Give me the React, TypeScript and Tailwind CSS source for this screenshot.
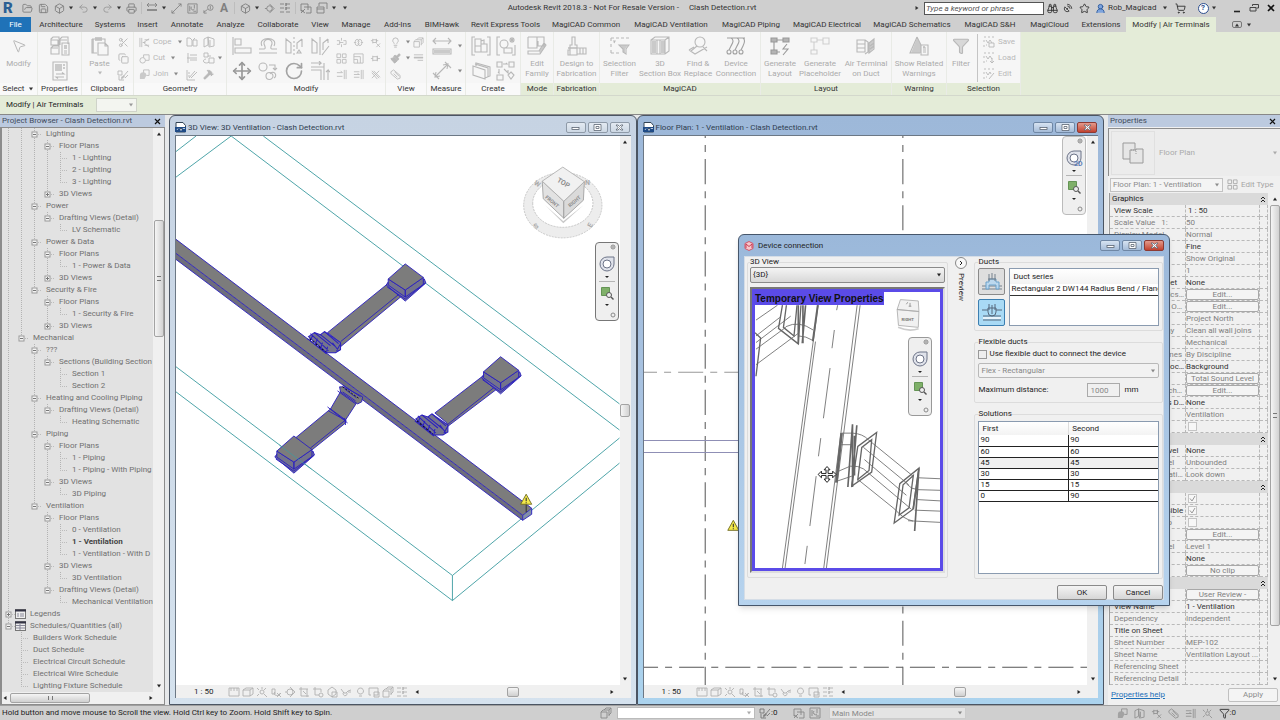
import React from "react";
import {
  Binoculars,
  Box,
  Copy,
  FolderOpen,
  Funnel,
  Hammer,
  Lightbulb,
  MousePointer2,
  Move,
  Paintbrush,
  Printer,
  Redo2,
  RotateCw,
  Save,
  SatelliteDish,
  Scissors,
  ShoppingCart,
  Star,
  Undo2,
  UserRound,
} from "lucide-react";

/* ---------- icons ---------- */

interface GlyphDef {
  box: number;
  d: string;
  fill?: string;
}

const GLYPHS: Record<string, GlyphDef> = {
  typeProps: {
    box: 20,
    d: "M1 3l2-2h6v8H1zM10 9V3l2-2h6v7M1 4h7M8 4v5M10 4h7M1 12l2-2h6v8H1zM1 12h7M12 7h7v12h-7zM14 15h3M14 17h3",
    fill: "M14 9h3v4h-3z",
  },
  pageProps: {
    box: 20,
    d: "M3 1h14v18H3zM6 13h8l-2-1.500M14 16H6l2 1.500",
    fill: "M5 3h7v7H5zM13 3h2v2h-2zM13 6h2v2h-2z",
  },
  paste: {
    box: 20,
    d: "M2 3h13v4M2 3v14h5M8 7h7l3 3v9H8zM15 7v3h3",
    fill: "M5 1h7v4H5zM2 3h2v14H2z",
  },
  match: { box: 12, d: "M1 2h4v4H1zM2 7v4h5M5 9l6-7M8 9l3-3", fill: "M4 8l3-2 1 2-4 3z" },
  cope: { box: 12, d: "M1 1v10M3 1v10M11 2L5 6l6 5M4 6h3M6 3h5M6 9h5" },
  circleCut: { box: 12, d: "M1 8a3 3 0 1 0 6 0a3 3 0 1 0-6 0M5 2h6v6H7M5 2v3" },
  joinGeo: { box: 12, d: "M5 1h6v6H8M5 1v3", fill: "M1 7a3 3 0 1 1 7 0l-2 4H1z" },
  offsetGeo: { box: 12, d: "M1 2h3l2 2v6H1zM7 4h4v6H7zM7 4l2-2" },
  wallJoin: { box: 12, d: "M1 3l4-2v8l-4 2zM5 1l6 2v7l-5 1zM7 4v6" },
  beam: { box: 12, d: "M2 1v10M4 3h7M4 6h7M4 8h7M1 6h3" },
  splitFace: { box: 12, d: "M1 1h4v4H1zM5 4h3M6 6h5v5H6zM3 7a3 2 0 1 0 3 3" },
  paintMat: { box: 12, d: "M1 1v10h8M3 9l6-7M5 9l6-6M2 4h2M2 7h2" },
  align: { box: 20, d: "M1 1v18M3 3h6v6H3zM3 12h16v5H3z" },
  offset: { box: 20, d: "M1 17h18M1 13h5c2 0 1-3 0-5c-1-6 9-6 8 0c-1 2-2 5 0 5h5M4 10c-5-10 17-10 12 0" },
  mirrorAxis: { box: 20, d: "M2 3l5 4v10H2zM10 1v2M10 5v2M10 9v2M10 13v2M10 17v2M18 3l-5 4v6M13 17l2-3 2 3zM18 3v8" },
  mirrorDraw: { box: 20, d: "M2 3l5 4v10H2zM10 1v18M18 3l-5 4v7M18 3v4M12 19l7-9" },
  copyMove: { box: 20, d: "M1 6a4 4 0 1 0 8 0a4 4 0 1 0-8 0M8 15a3 3 0 1 0 7 0a3 3 0 1 0-7 0M12 13a3 3 0 1 1 4 4M11 4h6v4M15 7l2 2 2-2" },
  trimCorner: { box: 20, d: "M1 6h13v13M1 9h10v10M1 2h10l-2-2M11 2L9 4M18 19V9l-2 2M18 9l2 2M14 6V2" },
  split: { box: 12, d: "M1 4h3v4H1M8 4h3v4H8M6 1v3M6 8v3M4 6h4" },
  splitGap: { box: 12, d: "M1 6h2M9 6h2M3 6a2 2 0 1 0 3 0a2 2 0 1 0-3 0M6 6a2 2 0 1 0 3 0a2 2 0 1 0-3 0" },
  unpin: { box: 12, d: "M1 4h2M3 2v5M3 3h4v3H3M7 2v4M7 4h2M7 7l4 4M11 7l-4 4" },
  array: { box: 12, d: "M1 1h4v4H1zM7 1h4v4H7zM1 7h4v4H1zM7 7h4v4H7z" },
  scale: { box: 12, d: "M1 11V1h10v10zM1 7h4v4M1 4h7v7" },
  pin: { box: 12, d: "M1 6h2M3 3v6M3 4h5v4H3M8 3v6M8 6h3" },
  trimOne: { box: 12, d: "M9 1v10M11 1v10M1 4h6l-2-2M1 8h6" },
  trimMulti: { box: 12, d: "M9 1v10M11 1v10M1 3h6M1 6h6l-2-1M1 9h6" },
  del: { box: 12, d: "M2 2l8 8M10 2l-8 8M4 2l7 7M2 4l6 7" },
  boxes: { box: 12, d: "M4 3l2-2h5v5l-2 2M1 5h6v6H1zM3 3h6v6M9 3l2-2M1 5l2-2" },
  lines: { box: 12, d: "M1 2h10M1 5h10M5 8h6", fill: "M1 4h10v2H1z" },
  tag: { box: 12, d: "M1 3l3-2 7 6v3l-3 1-7-6zM4 5l4 4M5 3l5 5" },
  measure: { box: 20, d: "M1 5h18M4 2L1 5l3 3M16 2l3 3-3 3M1 13h18v5H1z", fill: "M2 14h16v3H2z" },
  dimension: { box: 20, d: "M3 16L16 3M1 12l6 6M13 1l6 6M4 11l-1 5 5-1M11 4l5-1-1 5" },
  createSimilar: { box: 20, d: "M4 1H1v18h3M16 1h3v18h-3M4 3h6v7H4zM4 10h6v6H4zM10 8h6v8h-6zM10 5l3-1v4" },
  createGroup: { box: 20, d: "M4 1H1v18h3M16 19h3V9M4 8a4 4 0 1 0 8 0a4 4 0 1 0-8 0M8 12h8v5H8zM16 1v6M13 4h6M14 2l4 4M18 2l-4 4" },
  assembly: { box: 20, d: "M2 5l12 4v9L2 14zM5 5V2l14 4v9l-5 2M4 3l13 4v9" },
  parts: { box: 20, d: "M1 1h5v5H1zM13 1h5v5h-5zM7 3h4l-1-1M3 8v4l-1-1M8 8l4 4v-3M1 14h6v5H1zM15 11l3 3-3 4-3-4z" },
  editFamily: { box: 20, d: "M1 1h16v9H11V5M1 1v11h9V1M1 15v3h12l6-9-2-2-5 8z", fill: "M12 15l5-7 2 1-6 9z" },
  fabrication: { box: 20, d: "M5 1h3v8h2v10H3V9h2zM10 12h9v6h-9M13 12v6M16 12v6M1 14h2v5H1z", fill: "M1 11h9v2H1z" },
  selFilter: { box: 20, d: "M1 2h3M6 2h3M11 2h3M16 2h3M1 2v3M1 8v3M1 14v3M1 17h3M6 17h3M3 5h2l-1 2M9 9h10l-3 4v5l-3-2v-3z", fill: "M10 9h8l-3 4v4l-2-1v-3z" },
  sectionBox: { box: 20, d: "M1 4l4-3h14v14l-4 3H1zM1 4h14v14M15 4l4-3M7 4v14M10 4v14", fill: "M2 5h4v12H2zM11 5h4v12h-4z" },
  find: { box: 20, d: "M7 6a5 5 0 1 0 10 0a5 5 0 1 0-10 0M1 14l6 4 12-7M9 10l-6 5M15 11l4 4M1 14l5-3" },
  device: { box: 20, d: "M1 2h18M2 2h3c4 2 1 6 0 8l-2 4M8 2h3c4 2 1 6 0 8l-2 4M14 2h3c3 2 1 6 0 8l-2 4M1 16a2 2 0 1 0 4 0a2 2 0 1 0-4 0M7 16a2 2 0 1 0 4 0a2 2 0 1 0-4 0M13 16a2 2 0 1 0 4 0a2 2 0 1 0-4 0" },
  genLayout: { box: 20, d: "M7 4h6M4 6v8M1 2h6v4H1zM13 2h6v4h-6zM7 16h3M1 14h6v4H1zM17 8l-4 5h5l-5 6", fill: "M1 2h6v4H1zM13 2h6v4h-6zM1 14h6v4H1z" },
  genPlaceholder: { box: 20, d: "M7 4h6M4 6v8M1 2h6v4H1zM13 2h6v6h-6zM1 14h6v4H1z" },
  airTerminal: { box: 20, d: "M1 4h8v12H1zM1 8h8M1 12h8M9 4l3 2v10l-3 2M13 7l5-4v10l-5 4zM14 10l4-3M14 13l4-3", fill: "M13 7l5-4v9l-5 4z" },
  warnings: { box: 20, d: "M8 1L1 17h10M8 1l4 8M12 9h7v10h-7zM14 12h3M14 14h3M14 16h3", fill: "M8 2l4 7v8H2zM14 10h2v2h-2z" },
  selSave: { box: 12, d: "M1 1h2M5 1h2M9 1h2M1 4v2M1 9v2M3 9h1M3 4l2 3 2-3 2 3M6 7h5v4H6z" },
  selLoad: { box: 12, d: "M1 1h2M5 1h2M9 1h2M1 4v2M1 9v2M3 9h1M3 4l2 3 2-3 2 3M9 6v5M7 9l2 2 2-2" },
  selEdit: { box: 12, d: "M1 1h2M5 1h2M9 1h2M1 4v2M1 9v2M3 9h1M3 4l2 3 2-3 1 2M6 11l5-6" },
  dimLine: { box: 12, d: "M1 3h10M1 8h10M3 1L1 3l2 2M9 1l2 2-2 2", fill: "M1 7h10v2H1z" },
  diag: { box: 12, d: "M1 11L11 1M1 8v3h3M8 1h3v3" },
  sheet: { box: 12, d: "M1 1h10v10H1zM3 3v6M5 4a2 2 0 1 0 3 3M8 2v4M7 9h3" },
  tagOne: { box: 12, d: "M5 5a3 3 0 1 0 6 0a3 3 0 1 0-6 0M1 10l4-3M8 3v4M1 8v3h3" },
  sectionMark: { box: 12, d: "M3 6a3 3 0 1 0 6 0a3 3 0 1 0-6 0M1 6h2M6 1l5 5-5 5" },
  thin: { box: 12, d: "M1 2h4M7 2h4M1 6h4M7 6h4M1 10h4M7 10h4", fill: "M6 1h2v3H6zM6 5h2v3H6z" },
  closeHidden: { box: 12, d: "M1 2h7v6M1 2v7h3M4 5h7v6H6M1 8l4 3M5 7l-4 4" },
  switchWin: { box: 12, d: "M3 1h8v6M3 1v3M1 5h7v6H1zM1 7h7" },
  scaleBar: { box: 12, d: "M1 2h10v8H1zM3 2v3M6 2v3M9 2v3" },
  cubeSmall: { box: 12, d: "M1 4h7v6H1zM1 4l3-2h7v6l-3 2M8 4l3-2" },
  sun: { box: 12, d: "M4 6a2 2 0 1 0 4 0a2 2 0 1 0-4 0M1 2l2 2M10 2L8 4M1 10l2-2M8 8l3 3M6 1v2" },
  shadow: { box: 12, d: "M2 3h3v5H2zM5 6a3 2 0 1 0 5 1M7 7l4 4M11 7l-4 4" },
  crop: { box: 12, d: "M1 3h9M3 1v9h8M9 3v8M5 5l3 3" },
  cropOn: { box: 12, d: "M1 3h8M3 1v8h4M9 3v3M7 9a2 2 0 1 0 4 0a2 2 0 1 0-4 0" },
  lock3d: { box: 12, d: "M2 4l4-3 4 3v4L6 11 2 8zM6 6h5v5H6z" },
  glasses: { box: 12, d: "M1 3l3 4h2l2-2 3-1M4 6a2 2 0 1 0 3 1M8 6h3" },
  bulb: { box: 12, d: "M6 8a3 3 0 1 1 1 0zM5 10h3" },
  constraints: { box: 12, d: "M1 2h9v7H6M1 2v7h2M6 6h5v5H6z" },
};

const Glyph = ({ name, className = "size-3" }: { name: string; className?: string }) => {
  const glyph = GLYPHS[name];
  return (
    <svg viewBox={`0 0 ${glyph.box} ${glyph.box}`} className={`shrink-0 ${className}`} aria-hidden="true">
      {glyph.fill && <path d={glyph.fill} fill="currentColor" opacity="0.7" />}
      <path d={glyph.d} fill="none" stroke="currentColor" strokeWidth={glyph.box === 20 ? 1.1 : 0.9} />
    </svg>
  );
};

const Caret = ({ className = "" }: { className?: string }) => (
  <svg viewBox="0 0 6 4" className={`h-1 w-1.5 shrink-0 ${className}`} aria-hidden="true">
    <path d="M1 0.5h4L3 3.5z" fill="currentColor" />
  </svg>
);

const WarningSign = ({ x, y }: { x: number; y: number }) => (
  <g>
    <path d={`M${x} ${y - 6}l5.5 10h-11z`} fill="#f5ea4a" stroke="#6f6a20" strokeWidth="0.9" />
    <path d={`M${x} ${y - 2.5}v3.5M${x} ${y + 2}v1`} stroke="#333" strokeWidth="1.1" />
  </g>
);

/* ---------- title bar ---------- */

const QuickButton = ({ label, children }: { label: string; children: React.ReactNode }) => (
  <button aria-label={label} className="flex h-4 w-4 shrink-0 items-center justify-center">
    {children}
  </button>
);

const Separator = () => <span className="mx-0.5 h-3 w-px bg-[#bdbdbd]" />;

const TitleBar = () => (
  <header className="flex h-4 items-center bg-[#cfcfcf] text-[#333]">
    <div className="flex flex-1 items-center text-[#808080]">
      <span className="w-[19px] pl-[3px] text-[15px] leading-4 font-black text-[#2c5f94]">R</span>
      <QuickButton label="Open"><FolderOpen className="size-[11px]" /></QuickButton>
      <QuickButton label="Save"><Save className="size-[11px]" /></QuickButton>
      <QuickButton label="Synchronize"><Box className="size-[11px]" /></QuickButton>
      <Caret className="mx-px text-[#333]" />
      <QuickButton label="Undo"><Undo2 className="size-[11px] text-[#9a9a9a]" /></QuickButton>
      <Caret className="mx-px text-[#333]" />
      <QuickButton label="Redo"><Redo2 className="size-[11px] text-[#9a9a9a]" /></QuickButton>
      <Caret className="mx-px text-[#333]" />
      <QuickButton label="Print"><Printer className="size-[11px]" /></QuickButton>
      <Separator />
      <QuickButton label="Measure"><Glyph name="dimLine" /></QuickButton>
      <Caret className="mx-px text-[#333]" />
      <QuickButton label="Dimension"><Glyph name="diag" className="size-[11px]" /></QuickButton>
      <QuickButton label="Sheet"><Glyph name="sheet" className="size-[11px]" /></QuickButton>
      <QuickButton label="Tag"><Glyph name="tagOne" className="size-[11px]" /></QuickButton>
      <QuickButton label="Text"><span className="text-[12px] leading-4 font-bold">A</span></QuickButton>
      <Separator />
      <QuickButton label="3D view"><Box className="size-[11px]" /></QuickButton>
      <Caret className="mx-px text-[#333]" />
      <QuickButton label="Section"><Glyph name="sectionMark" className="size-[11px]" /></QuickButton>
      <QuickButton label="Thin lines"><Glyph name="thin" /></QuickButton>
      <Separator />
      <QuickButton label="Close hidden"><Glyph name="closeHidden" /></QuickButton>
      <QuickButton label="Switch windows"><Glyph name="switchWin" /></QuickButton>
      <Caret className="mx-px text-[#333]" />
      <Caret className="mx-1 text-[#333]" />
    </div>
    <p className="mr-4 whitespace-pre">Autodesk Revit 2018.3 - Not For Resale Version -     Clash Detection.rvt</p>
    <div className="flex flex-1 items-center justify-end">
      <Caret className="mr-1 -rotate-90" />
      <input
        type="text"
        aria-label="Search help"
        placeholder="Type a keyword or phrase"
        className="h-[13px] w-[120px] border border-[#555] bg-white px-px text-[8px] italic placeholder:text-[#555]"
      />
      <QuickButton label="Search"><Binoculars className="size-[11px]" /></QuickButton>
      <QuickButton label="Communication center"><SatelliteDish className="size-[10px]" /></QuickButton>
      <QuickButton label="Favorites"><Star className="size-[11px]" /></QuickButton>
      <QuickButton label="Account"><UserRound className="size-[11px] fill-[#7da3dd] text-[#2f5c9e]" /></QuickButton>
      <span className="w-[50px]">Rob_Magicad</span>
      <Caret className="mx-1" />
      <QuickButton label="App store"><ShoppingCart className="size-[11px]" /></QuickButton>
      <span className="w-[7px]" />
      <QuickButton label="Help">
        <span className="flex size-[11px] items-center justify-center rounded-full border border-[#2d4f8f] bg-white font-bold text-[#2d4f8f]">?</span>
      </QuickButton>
      <Caret className="mr-[11px]" />
      <button aria-label="Minimize" className="flex h-4 w-[18px] items-center justify-center">
        <svg viewBox="0 0 10 10" className="size-2.5"><path d="M2 8.500h6" stroke="#222" strokeWidth="1.600" /></svg>
      </button>
      <button aria-label="Restore" className="flex h-4 w-4 items-center justify-center">
        <svg viewBox="0 0 10 10" className="size-2.5"><path d="M3.500 3V1.500h6v3.500h-2M1 4.500h6V8H1z" fill="none" stroke="#444" /></svg>
      </button>
      <button aria-label="Close" className="flex h-4 w-[18px] items-center justify-center">
        <svg viewBox="0 0 10 10" className="size-2.5"><path d="M2 2l6 6M8 2l-6 6" stroke="#111" strokeWidth="1.700" /></svg>
      </button>
    </div>
  </header>
);

const TABS = [
  { label: "Architecture", width: "w-[56px]" },
  { label: "Systems", width: "w-[42px]" },
  { label: "Insert", width: "w-[33px]" },
  { label: "Annotate", width: "w-[46px]" },
  { label: "Analyze", width: "w-[41px]" },
  { label: "Collaborate", width: "w-[54px]" },
  { label: "View", width: "w-[30px]" },
  { label: "Manage", width: "w-[42px]" },
  { label: "Add-Ins", width: "w-[41px]" },
  { label: "BIMHawk", width: "w-[48px]" },
  { label: "Revit Express Tools", width: "w-[79px]" },
  { label: "MagiCAD Common", width: "w-[82px]" },
  { label: "MagiCAD Ventilation", width: "w-[88px]" },
  { label: "MagiCAD Piping", width: "w-[72px]" },
  { label: "MagiCAD Electrical", width: "w-[80px]" },
  { label: "MagiCAD Schematics", width: "w-[90px]" },
  { label: "MagiCAD S&H", width: "w-[66px]" },
  { label: "MagiCloud", width: "w-[53px]" },
  { label: "Extensions", width: "w-[50px]" },
];

const RibbonTabs = () => (
  <nav className="flex h-4 items-stretch bg-[#cfcfcf] pt-px text-[#333]">
    <button className="mr-0.5 w-[31px] bg-[#1f72b8] text-white">File</button>
    {TABS.map((tab) => (
      <button key={tab.label} className={`shrink-0 whitespace-nowrap ${tab.width}`}>
        {tab.label}
      </button>
    ))}
    <button className="w-[90px] shrink-0 bg-[#e4ecd8] whitespace-nowrap">Modify | Air Terminals</button>
    <span className="flex items-center gap-1 pl-4">
      <span className="flex h-[7px] w-2.5 items-center justify-center rounded-xs border border-[#777]">
        <Caret className="rotate-180" />
      </span>
      <Caret />
    </span>
  </nav>
);

/* ---------- ribbon ---------- */

interface PanelProps {
  title: string;
  width: string;
  green?: boolean;
  caret?: boolean;
  children: React.ReactNode;
}

const Panel = ({ title, width, green = false, caret = false, children }: PanelProps) => (
  <section className={`flex shrink-0 flex-col border-r border-[#e9ebe6] bg-[#f6f6f6] ${width}`}>
    <div className="flex h-[51px] pt-0.5 text-[#b8b8b8]">{children}</div>
    <h2 className={`flex h-3 items-center justify-center gap-1 text-[#333] ${green ? "bg-[#e4ecd8]" : "bg-[#f9f9f9]"}`}>
      {title}
      {caret && <Caret />}
    </h2>
  </section>
);

const BigTool = ({ icon, lines, width }: { icon: React.ReactNode; lines: string[]; width: string }) => (
  <button className={`flex shrink-0 flex-col items-center ${width}`}>
    <span className="mb-px flex h-6 items-center justify-center">{icon}</span>
    {lines.map((line) => (
      <span key={line} className="leading-[10px] whitespace-nowrap text-[#ababab]">
        {line}
      </span>
    ))}
  </button>
);

const IconButton = ({ label, size = "h-4", children }: { label: string; size?: string; children: React.ReactNode }) => (
  <button aria-label={label} className={`flex items-center justify-center ${size}`}>
    {children}
  </button>
);

const Ribbon = () => (
  <div className="flex h-16 border-b border-[#d3d8cc] bg-[#e4ecd8]">
    <Panel title="Select" width="w-[38px]" caret>
      <BigTool icon={<MousePointer2 className="size-4" strokeWidth={1.5} />} lines={["Modify"]} width="w-full" />
    </Panel>
    <Panel title="Properties" width="w-[44px]">
      <div className="grid w-full grid-cols-1">
        <IconButton label="Type properties" size="h-6"><Glyph name="typeProps" className="size-5" /></IconButton>
        <IconButton label="Properties" size="h-6"><Glyph name="pageProps" className="size-5" /></IconButton>
      </div>
    </Panel>
    <Panel title="Clipboard" width="w-[52px]">
      <div className="flex w-[35px] flex-col items-center">
        <BigTool icon={<Glyph name="paste" className="size-5" />} lines={["Paste"]} width="w-full" />
        <Caret className="mt-0.5" />
      </div>
      <div className="grid w-3 grid-cols-1">
        <IconButton label="Cut to clipboard"><Scissors className="size-[11px]" /></IconButton>
        <IconButton label="Copy to clipboard"><Copy className="size-[11px]" /></IconButton>
        <IconButton label="Match type"><Glyph name="match" /></IconButton>
      </div>
    </Panel>
    <Panel title="Geometry" width="w-[93px]">
      <div className="w-[49px] pl-[5px]">
        {[
          { label: "Cope", icon: "cope" },
          { label: "Cut", icon: "circleCut" },
          { label: "Join", icon: "joinGeo" },
        ].map((tool) => (
          <button key={tool.label} className="flex h-4 w-full items-center gap-[3px]">
            <Glyph name={tool.icon} className="size-[11px]" />
            {tool.label}
            <Caret className="ml-0.5 text-[#888]" />
          </button>
        ))}
      </div>
      <div className="grid grid-cols-[17px_17px_6px] items-center">
        <IconButton label="Cut opening"><Glyph name="offsetGeo" /></IconButton>
        <IconButton label="Wall joins"><Glyph name="wallJoin" /></IconButton>
        <span />
        <IconButton label="Beam joins"><Glyph name="beam" /></IconButton>
        <IconButton label="Split face"><Glyph name="splitFace" /></IconButton>
        <Caret className="text-[#888]" />
        <IconButton label="Paint"><Glyph name="paintMat" /></IconButton>
        <IconButton label="Demolish"><Hammer className="size-[11px] fill-current" /></IconButton>
      </div>
    </Panel>
    <Panel title="Modify" width="w-[159px]">
      <div className="ml-0.5 grid w-[104px] grid-cols-4">
        <IconButton label="Align" size="h-6"><Glyph name="align" className="size-5" /></IconButton>
        <IconButton label="Offset" size="h-6"><Glyph name="offset" className="size-5" /></IconButton>
        <IconButton label="Mirror by axis" size="h-6"><Glyph name="mirrorAxis" className="size-5" /></IconButton>
        <IconButton label="Mirror by line" size="h-6"><Glyph name="mirrorDraw" className="size-5" /></IconButton>
        <IconButton label="Move" size="h-6"><Move className="size-5 text-[#999]" /></IconButton>
        <IconButton label="Copy" size="h-6"><Glyph name="copyMove" className="size-5" /></IconButton>
        <IconButton label="Rotate" size="h-6"><RotateCw className="size-5 text-[#a3a3a3]" /></IconButton>
        <IconButton label="Trim to corner" size="h-6"><Glyph name="trimCorner" className="size-5" /></IconButton>
      </div>
      <div className="grid w-[51px] grid-cols-3">
        {["split", "splitGap", "unpin", "array", "scale", "pin", "trimOne", "trimMulti", "del"].map((name) => (
          <IconButton key={name} label={name}><Glyph name={name} className="size-[11px]" /></IconButton>
        ))}
      </div>
    </Panel>
    <Panel title="View" width="w-[41px]">
      <div className="grid grid-cols-[19px_6px_14px] items-center">
        <IconButton label="Hide"><Lightbulb className="size-[11px]" /></IconButton>
        <Caret className="text-[#888]" />
        <IconButton label="Displace"><Glyph name="boxes" className="size-[11px]" /></IconButton>
        <IconButton label="Override"><Paintbrush className="size-[11px] fill-current" /></IconButton>
        <Caret className="text-[#888]" />
        <IconButton label="Linework"><Glyph name="lines" className="size-[11px]" /></IconButton>
        <IconButton label="Selection box"><Glyph name="tag" className="size-[11px]" /></IconButton>
      </div>
    </Panel>
    <Panel title="Measure" width="w-[39px]">
      <div className="grid grid-cols-[30px_6px] items-center">
        <IconButton label="Measure" size="h-6"><Glyph name="measure" className="size-5" /></IconButton>
        <Caret className="text-[#888]" />
        <IconButton label="Dimension" size="h-6"><Glyph name="dimension" className="size-5" /></IconButton>
        <Caret className="text-[#888]" />
      </div>
    </Panel>
    <Panel title="Create" width="w-[55px]">
      <div className="ml-0.5 grid w-[50px] grid-cols-2">
        {["createSimilar", "createGroup", "assembly", "parts"].map((name) => (
          <IconButton key={name} label={name} size="h-6"><Glyph name={name} className="size-5" /></IconButton>
        ))}
      </div>
    </Panel>
    <Panel title="Mode" width="w-[33px]" green>
      <BigTool icon={<Glyph name="editFamily" className="size-5" />} lines={["Edit", "Family"]} width="w-full" />
    </Panel>
    <Panel title="Fabrication" width="w-[46px]" green>
      <BigTool icon={<Glyph name="fabrication" className="size-5" />} lines={["Design to", "Fabrication"]} width="w-full" />
    </Panel>
    <Panel title="MagiCAD" width="w-[161px]" green>
      <BigTool icon={<Glyph name="selFilter" className="size-5" />} lines={["Selection", "Filter"]} width="w-[39px]" />
      <BigTool icon={<Glyph name="sectionBox" className="size-5" />} lines={["3D", "Section Box"]} width="w-[42px]" />
      <BigTool icon={<Glyph name="find" className="size-5" />} lines={["Find &", "Replace"]} width="w-[34px]" />
      <BigTool icon={<Glyph name="device" className="size-5 text-[#a0a0a0]" />} lines={["Device", "Connection"]} width="w-[42px]" />
    </Panel>
    <Panel title="Layout" width="w-[131px]" green>
      <BigTool icon={<Glyph name="genLayout" className="size-5 text-[#999]" />} lines={["Generate", "Layout"]} width="w-[38px]" />
      <BigTool icon={<Glyph name="genPlaceholder" className="size-5 text-[#cfcfcf]" />} lines={["Generate", "Placeholder"]} width="w-[42px]" />
      <BigTool icon={<Glyph name="airTerminal" className="size-5" />} lines={["Air Terminal", "on Duct"]} width="w-[50px]" />
    </Panel>
    <Panel title="Warning" width="w-[55px]" green>
      <BigTool icon={<Glyph name="warnings" className="size-5" />} lines={["Show Related", "Warnings"]} width="w-full" />
    </Panel>
    <Panel title="Selection" width="w-[74px]" green>
      <BigTool icon={<Funnel className="size-[18px] fill-[#d8d8d8]" strokeWidth={1.5} />} lines={["Filter"]} width="w-[28px]" />
      <div className="ml-0.5 h-12 border-l border-[#c4c4c4] pl-[5px]">
        {[
          { label: "Save", icon: "selSave" },
          { label: "Load", icon: "selLoad" },
          { label: "Edit", icon: "selEdit" },
        ].map((tool) => (
          <button key={tool.label} className="flex h-4 items-center gap-[3px]">
            <Glyph name={tool.icon} />
            {tool.label}
          </button>
        ))}
      </div>
    </Panel>
  </div>
);

const Dropdown = ({ label, value, className }: { label: string; value: string; className: string }) => (
  <span className={`relative flex border ${className}`}>
    <select aria-label={label} className="w-full appearance-none truncate bg-transparent pl-0.5 outline-none">
      <option>{value}</option>
    </select>
    <Caret className="pointer-events-none absolute top-1/2 right-0.5 -translate-y-1/2" />
  </span>
);

const OptionsBar = () => (
  <div className="flex h-[18px] items-center bg-[#e4ecd8] pl-1.5 text-[#222]">
    <span className="w-[90px]">Modify | Air Terminals</span>
    <Dropdown label="Level" value="" className="h-[14px] w-[41px] border-[#cfd3c9] bg-[#f3f5f0] text-[#999]" />
  </div>
);

/* ---------- scroll bars ---------- */

interface ScrollProps {
  before: number;
  thumb: number;
  after: number;
}

const VerticalScroll = ({ before, thumb, after }: ScrollProps) => (
  <div className="flex w-[11px] shrink-0 flex-col items-center bg-[#f0f0f0] text-[#222]">
    <Caret className="my-1 rotate-180" />
    <div className="flex w-full flex-1 flex-col items-center">
      <div style={{ flexGrow: before }} />
      <div
        style={{ flexGrow: thumb }}
        className="flex w-2.5 items-center justify-center rounded-xs border border-[#a3a3a3] bg-linear-to-r from-[#f5f5f5] to-[#d2d2d2]"
      >
        {thumb > 50 && <span className="h-[5px] w-1 border-y border-[#777]" />}
      </div>
      <div style={{ flexGrow: after }} />
    </div>
    <Caret className="my-1" />
  </div>
);

const HorizontalScroll = ({ before, thumb, after }: ScrollProps) => (
  <div className="flex h-[11px] flex-1 items-center bg-[#f0f0f0] text-[#222]">
    <Caret className="rotate-90" />
    <div className="flex h-full flex-1 items-center">
      <div style={{ flexGrow: before }} />
      <div
        style={{ flexGrow: thumb }}
        className="flex h-2.5 items-center justify-center rounded-xs border border-[#a3a3a3] bg-linear-to-b from-[#f5f5f5] to-[#cfcfcf]"
      >
        {thumb > 50 && <span className="h-1 w-[5px] border-x border-[#777]" />}
      </div>
      <div style={{ flexGrow: after }} />
    </div>
    <Caret className="-rotate-90" />
  </div>
);

/* ---------- project browser ---------- */

interface TreeRow {
  depth: number;
  text: string;
  state?: "open" | "closed";
  bold?: boolean;
  icon?: boolean;
}

const TREE: TreeRow[] = [
  { depth: 2, text: "Lighting", state: "open" },
  { depth: 3, text: "Floor Plans", state: "open" },
  { depth: 4, text: "1 - Lighting" },
  { depth: 4, text: "2 - Lighting" },
  { depth: 4, text: "3 - Lighting" },
  { depth: 3, text: "3D Views", state: "closed" },
  { depth: 2, text: "Power", state: "open" },
  { depth: 3, text: "Drafting Views (Detail)", state: "open" },
  { depth: 4, text: "LV Schematic" },
  { depth: 2, text: "Power & Data", state: "open" },
  { depth: 3, text: "Floor Plans", state: "open" },
  { depth: 4, text: "1 - Power & Data" },
  { depth: 3, text: "3D Views", state: "closed" },
  { depth: 2, text: "Security & Fire", state: "open" },
  { depth: 3, text: "Floor Plans", state: "open" },
  { depth: 4, text: "1 - Security & Fire" },
  { depth: 3, text: "3D Views", state: "closed" },
  { depth: 1, text: "Mechanical", state: "open" },
  { depth: 2, text: "???", state: "open" },
  { depth: 3, text: "Sections (Building Section", state: "open" },
  { depth: 4, text: "Section 1" },
  { depth: 4, text: "Section 2" },
  { depth: 2, text: "Heating and Cooling Piping", state: "open" },
  { depth: 3, text: "Drafting Views (Detail)", state: "open" },
  { depth: 4, text: "Heating Schematic" },
  { depth: 2, text: "Piping", state: "open" },
  { depth: 3, text: "Floor Plans", state: "open" },
  { depth: 4, text: "1 - Piping" },
  { depth: 4, text: "1 - Piping - With Piping" },
  { depth: 3, text: "3D Views", state: "open" },
  { depth: 4, text: "3D Piping" },
  { depth: 2, text: "Ventilation", state: "open" },
  { depth: 3, text: "Floor Plans", state: "open" },
  { depth: 4, text: "0 - Ventilation" },
  { depth: 4, text: "1 - Ventilation", bold: true },
  { depth: 4, text: "1 - Ventilation - With D" },
  { depth: 3, text: "3D Views", state: "open" },
  { depth: 4, text: "3D Ventilation" },
  { depth: 3, text: "Drafting Views (Detail)", state: "open" },
  { depth: 4, text: "Mechanical Ventilation" },
  { depth: 0, text: "Legends", state: "closed", icon: true },
  { depth: 0, text: "Schedules/Quantities (all)", state: "open", icon: true },
  { depth: 1, text: "Builders Work Schedule" },
  { depth: 1, text: "Duct Schedule" },
  { depth: 1, text: "Electrical Circuit Schedule" },
  { depth: 1, text: "Electrical Wire Schedule" },
  { depth: 1, text: "Lighting Fixture Schedule" },
];

// true when a later sibling exists at the given depth
const continues = (index: number, depth: number) => {
  for (let i = index + 1; i < TREE.length; i++) {
    if (TREE[i].depth === depth) return true;
    if (TREE[i].depth < depth) return false;
  }
  return false;
};

const TreeLine = ({ row, index }: { row: TreeRow; index: number }) => (
  <li className="flex h-3 items-center whitespace-nowrap">
    {Array.from({ length: row.depth + 1 }, (_, depth) => (
      <svg key={depth} viewBox="0 0 13 12" className="h-3 w-[13px] shrink-0" aria-hidden="true">
        {(depth === row.depth || continues(index, depth)) && (
          <path
            d={continues(index, depth) ? "M6.500 0v12" : "M6.500 0v6"}
            stroke="#b3b3b3"
            strokeDasharray="1 1"
          />
        )}
        {depth === row.depth && <path d="M6 6.500h7" stroke="#bcbcbc" strokeDasharray="1 1" />}
        {depth === row.depth && row.state && (
          <g stroke="#9a9a9a" fill="#f4f4f4">
            <rect x="4" y="4" width="5" height="5" />
            <path d={row.state === "open" ? "M5 6.500h3" : "M5 6.500h3M6.500 5v3"} stroke="#777" />
          </g>
        )}
      </svg>
    ))}
    {row.icon && (
      <svg viewBox="0 0 11 10" className="mr-0.5 h-2.5 w-[11px] shrink-0" aria-hidden="true">
        <rect x="0.500" y="0.500" width="10" height="9" fill="#eee" stroke="#777" />
        <path d="M0 1.500h11" stroke="#334" strokeWidth="2" />
        <path d={row.state === "open" ? "M1 4.500h9M1 7h9M5 3v6" : "M2 5h2M5 5h4M2 7h2M5 7h4"} stroke="#889" />
      </svg>
    )}
    <span className={row.bold ? "pl-[5px] font-bold text-[#444]" : row.icon ? "pl-0.5" : "pl-[5px]"}>{row.text}</span>
  </li>
);

const PaneTitle = ({ children }: { children: React.ReactNode }) => (
  <h2 className="flex h-3 shrink-0 items-center bg-[#bccadf] pl-0.5 text-[#3f4a5c]">
    <span className="flex-1">{children}</span>
    <button aria-label="Close pane" className="px-1">
      <svg viewBox="0 0 7 7" className="size-[7px]"><path d="M1 1l5 5M6 1l-5 5" stroke="#111" strokeWidth="1.200" /></svg>
    </button>
  </h2>
);

const ProjectBrowser = () => (
  <aside className="flex w-[165px] shrink-0 flex-col">
    <PaneTitle>Project Browser - Clash Detection.rvt</PaneTitle>
    <div className="flex flex-1 flex-col border border-l-2 border-[#8c8c8c] bg-[#e2e2e2]">
      <div className="flex flex-1">
        <ul className="w-0 flex-1 overflow-hidden text-[#707070]">
          {TREE.map((row, index) => (
            <TreeLine key={index} row={row} index={index} />
          ))}
        </ul>
        <VerticalScroll before={80} thumb={111} after={345} />
      </div>
      <div className="flex h-3 items-center bg-[#f0f0f0] pr-2.5">
        <HorizontalScroll before={2} thumb={73} after={58} />
      </div>
    </div>
  </aside>
);

/* ---------- drawing windows ---------- */

const WindowButtons = ({ active = false }: { active?: boolean }) => (
  <div className="flex gap-0.5">
    {["Minimize", "Maximize", "Close"].map((label) => (
      <button
        key={label}
        aria-label={label}
        className={`flex h-[11px] w-5 items-center justify-center rounded-xs border ${
          active && label === "Close"
            ? "border-[#8d3a33] bg-linear-to-b from-[#e39a8c] to-[#c2402f]"
            : active
              ? "border-[#6f87a5] bg-linear-to-b from-[#d7e3f1] to-[#a5bcd8]"
              : "border-[#8e9aa8] bg-linear-to-b from-[#e3eaf2] to-[#cdd8e4]"
        }`}
      >
        <svg viewBox="0 0 9 7" className="h-[7px] w-[9px]" fill="#fff" stroke="#5a6472" strokeWidth="0.8">
          {label === "Minimize" && <rect x="1" y="3.500" width="7" height="2" />}
          {label === "Maximize" && <path d="M1 0.500h7v6H1zM3 2.500h3v2H3z" />}
          {label === "Close" && <path d="M1 1h2l1.500 1.500L6 1h2L5.800 3.500 8 6H6L4.500 4.500 3 6H1l2.200-2.500z" />}
        </svg>
      </button>
    ))}
  </div>
);

interface ViewWindowProps {
  title: string;
  active?: boolean;
  tools: string[];
  thumb: ScrollProps;
  children: React.ReactNode;
}

const ViewWindow = ({ title, active = false, tools, thumb, children }: ViewWindowProps) => (
  <section
    className={`flex min-w-0 flex-1 flex-col rounded-t-md border border-[#4b5563] px-[5px] pb-1.5 ${
      active ? "bg-linear-to-b from-[#9db8d9] via-[#a9c3e1] to-[#abd3ee]" : "bg-linear-to-b from-[#c6d3e3] to-[#d5e2ee]"
    }`}
  >
    <header className="flex h-[19px] shrink-0 items-center pt-1 pr-px text-[#2f3d50]">
      <svg viewBox="0 0 11 11" className="mr-0.5 size-[11px]" aria-hidden="true">
        <path d="M1 0.500h7l2.500 3V10H1z" fill="#fff" stroke="#345" />
        <path d="M0 5h11v5H0z" fill="#1f4b86" />
        <path d="M2 8l1-1.500M5 6.500l1 2 1-2M8 6.500h2" stroke="#fff" strokeWidth="0.7" />
      </svg>
      <h2 className="flex-1">{title}</h2>
      <WindowButtons active={active} />
    </header>
    <div className="flex flex-1 border-t border-l border-[#6c7885] bg-white">
      <div className="relative flex-1 overflow-hidden">{children}</div>
      <VerticalScroll before={250} thumb={10} after={250} />
    </div>
    <footer className="flex h-[13px] shrink-0 items-center border-l border-[#6c7885] bg-[#f0f0f0] pr-4 text-[#222]">
      <span className="w-[52px] pl-[18px] whitespace-nowrap">1 : 50</span>
      <div className="mr-1.5 flex gap-0.5 text-[#b0b0b0]">
        {tools.map((name) => (
          <button key={name} aria-label={name}><Glyph name={name} /></button>
        ))}
      </div>
      <HorizontalScroll {...thumb} />
    </footer>
  </section>
);

const NavBar = ({ className, flat = false }: { className: string; flat?: boolean }) => (
  <div className={`absolute flex w-6 flex-col items-center rounded-sm border bg-[#ebebeb]/80 ${className}`}>
    <svg viewBox="0 0 22 77" className="h-[77px] w-[22px]" fill="none" stroke="#8a8a8a" aria-hidden="true">
      <circle cx="17" cy="4" r="2" />
      <path d="M16 3l2 2M18 3l-2 2" strokeWidth="0.6" />
      <path d="M11 14h7v7a7 7 0 1 1-7-7z" fill="#dfe2ea" stroke="#6d7488" />
      <circle cx="11" cy="21" r="4" fill="#fff" stroke="#6d7488" />
      <path d="M9 33h4l-2 2z" fill="#222" stroke="none" />
      <path d="M3 38.500h16" stroke="#b5b5b5" />
      <path d="M5.500 44.500h8v8h-8z" fill="#7fb069" stroke="#649455" />
      <circle cx="13" cy="52" r="2.500" fill="#eee" stroke="#555" />
      <path d="M15 54l2.500 2.500" stroke="#555" strokeWidth="1.400" />
      <path d="M9 61h4l-2 2z" fill="#222" stroke="none" />
      <circle cx="17" cy="72" r="2" />
      {flat && (
        <text x="11" y="29" fontSize="7" fontWeight="700" fill="#5d7fb8" stroke="none">
          2D
        </text>
      )}
    </svg>
  </div>
);

const TerminalBox = ({ x, y }: { x: number; y: number }) => (
  <g transform={`translate(${x} ${y})`} stroke="#2a1fc0" strokeWidth="0.9">
    <path d="M-19 21l2-3 17 11 19-14 1.500 4L0 37z" fill="#6f6f9a" />
    <path d="M-17 15v6L0 33V26zM18 13.500v7L0 33V26z" fill="#73738c" />
    <path d="M0 0l18 13.500L0 26l-17-11z" fill="#7c7c7c" />
    <path d="M-18 23L0 35l20-16" fill="none" />
  </g>
);

const Collar = ({ x, y }: { x: number; y: number }) => (
  <g transform={`translate(${x} ${y})`} stroke="#2a1fc0" strokeWidth="1" fill="#75758c">
    <path d="M0 2l6-4 6 2 4-3 16 11v7l-5 3-9 0z" />
    <path d="M2-1l18 17M6-2l16 13M12 0l15 12M16-3l14 12M-1 4l19 15M4 1l-2 5M9 4l-2 5M14 8l-2 6M19 12l-1 6M24 8l6 8M28 16l4-7" fill="none" />
    <path d="M1 4l16 13" stroke="#111" strokeDasharray="2 2" />
  </g>
);

const ThreeDView = () => (
  <svg viewBox="177 136 442 548" preserveAspectRatio="xMinYMin slice" className="absolute inset-0 size-full" role="img" aria-label="3D ventilation model">
    <g fill="none" stroke="#3c9ba0" strokeWidth="0.9">
      <path d="M177 151.500L197 136M177 177L232 136M264 136L619 403M232 136L619 429" />
      <path d="M177 366L452.500 574L619 437M177 391L452.500 599L619 462M452.500 574v25" />
    </g>

    {/* branches on the far side of the main duct */}
    <g stroke="#2a1fc0" strokeWidth="0.9">
      <path d="M392 280l13 9v4L341 346v-4L328 332z" fill="#7c7c7c" />
      <path d="M405 289L341 341" fill="none" />
      <path d="M487 372l14 9v4L447 426v-4l-12-10z" fill="#7c7c7c" />
      <path d="M501 381L447 424" fill="none" />
    </g>
    <TerminalBox x={405.5} y={263.5} />
    <TerminalBox x={500.5} y={356} />

    <path d="M177 239L531.500 507L522.500 514L177 253z" fill="#7c7c7c" />
    <path d="M177 253L522.500 514v5L177 259z" fill="#6d6d7c" />
    <path d="M522.500 514l9-7v6l-9 6z" fill="#8290a8" />
    <path d="M177 239L531.500 507v6l-9 6L177 259M177 253L522.500 514l9-7M522.500 514v5" fill="none" stroke="#2a1fc0" strokeWidth="0.9" />
    <Collar x={309} y={334} />
    <Collar x={416} y={416} />

    {/* branch with the offset bend */}
    <g stroke="#2a1fc0" strokeWidth="0.9" fill="#7c7c7c">
      <path d="M296 437L331 408l15 10v4L311 450z" />
      <path d="M311 447L346 419" fill="none" />
      <path d="M331 408l11-19 13 8 2 5-11 17z" />
      <path d="M328 406l20 16M329 410l18 10M345 417l1 7M338 390l18 13M340 386l4 0 19 10-1 5-4 2-17-12z" />
      <path d="M343 384l18 12M345 388l12 9M343 391l13 9" fill="none" />
      <path d="M343 386l17 12" stroke="#111" strokeDasharray="2 1.500" />
    </g>
    <TerminalBox x={294.5} y={435} />
    <path d="M280 444L312 468" stroke="#3c9ba0" strokeWidth="0.7" />

    <path d="M526 502v9" stroke="#333" />
    <WarningSign x={526} y={499} />

    {/* view cube */}
    <g stroke="#bcbcbc" strokeWidth="0.8">
      <path
        d="M523.500 205a39 32.500 0 1 0 78 0a39 32.500 0 1 0-78 0M532.500 203a30 24 0 1 0 60 0a30 24 0 1 0-60 0"
        fill="#ededed"
        fillRule="evenodd"
        strokeDasharray="2 1"
      />
      <path d="M545 205l18 16 20-16-20 18z" fill="#c9c9c9" stroke="none" />
      <path d="M542 181l21.500 20v17L543 198.500z" fill="#e2e2e2" stroke="#999" />
      <path d="M584 181.500l-20.500 19.500v17L583 200z" fill="#dadada" stroke="#999" />
      <path d="M562.500 167L584 181.500L563.500 201L542 181z" fill="#f1f1f1" stroke="#aaa" />
    </g>
    <g fontSize="7" fontWeight="700" fill="#8e8e8e" textAnchor="middle">
      <text x="563" y="185" transform="rotate(30 563 183)">TOP</text>
      <text x="552" y="203" fontSize="5" transform="rotate(40 552 201)">FRONT</text>
      <text x="574" y="203" fontSize="5" transform="rotate(-40 574 201)">RIGHT</text>
      <text x="537" y="186" fill="#aaa" transform="rotate(30 537 184)">W</text>
      <text x="587" y="185" fill="#aaa">N</text>
      <text x="536" y="228" fill="#aaa" transform="rotate(-30 536 226)">S</text>
      <text x="590" y="227" fill="#aaa" transform="rotate(-60 590 225)">E</text>
    </g>
  </svg>
);

const FloorPlanView = () => (
  <svg viewBox="643 136 442 548" preserveAspectRatio="xMinYMin slice" className="absolute inset-0 size-full" role="img" aria-label="Floor plan">
    <path d="M704 113V684M901 113V684" stroke="#555" strokeDasharray="25 7 7 7" />
    <path d="M643 371.500H1085" stroke="#999" strokeDasharray="25 7 7 7" strokeDashoffset="12" />
    <path d="M632 665.500H1085" stroke="#555" strokeDasharray="25 7 7 7" />
    <path d="M643 439.500H1085M643 451.500H1085" stroke="#8f8fb5" />
    <WarningSign x={732} y={525} />
  </svg>
);

const VIEW_TOOLS_3D = ["scaleBar", "cubeSmall", "sun", "shadow", "sectionMark", "crop", "cropOn", "lock3d", "glasses", "bulb", "constraints", "boxes", "thin"];
const VIEW_TOOLS_PLAN = ["scaleBar", "cubeSmall", "sun", "shadow", "crop", "cropOn", "glasses", "bulb", "constraints", "thin"];

/* ---------- properties ---------- */

interface PropRow {
  label: string;
  value?: string;
  kind?: "button" | "check" | "group";
  strong?: boolean;
  checked?: boolean;
}

const PROPERTIES: PropRow[] = [
  { label: "Graphics", kind: "group" },
  { label: "View Scale", value: " 1 : 50", strong: true },
  { label: "Scale Value   1:", value: "50" },
  { label: "Display Model", value: "Normal" },
  { label: "Detail Level", value: "Fine", strong: true },
  { label: "Parts Visibility", value: "Show Original" },
  { label: "Detail Number", value: "1" },
  { label: "Rotation on Sheet", value: "None", strong: true },
  { label: "Visibility/Graphics Over", value: "Edit...", kind: "button" },
  { label: "Graphic Display Options", value: "Edit...", kind: "button" },
  { label: "Orientation", value: "Project North" },
  { label: "Wall Join Display", value: "Clean all wall joins" },
  { label: "Discipline", value: "Mechanical" },
  { label: "Show Hidden Lines", value: "By Discipline" },
  { label: "Color Scheme Location", value: "Background", strong: true },
  { label: "Color Scheme", value: "Total Sound Level", kind: "button" },
  { label: "System Color Schemes", value: "Edit...", kind: "button" },
  { label: "Default Analysis Display", value: "None", strong: true },
  { label: "Sub-Discipline", value: "Ventilation" },
  { label: "Sun Path", kind: "check" },
  { label: "Underlay", kind: "group" },
  { label: "Range: Base Level", value: "None", strong: true },
  { label: "Range: Top Level", value: "Unbounded" },
  { label: "Underlay Orientation", value: "Look down" },
  { label: "Extents", kind: "group" },
  { label: "Crop View", kind: "check", checked: true },
  { label: "Crop Region Visible", kind: "check", checked: true, strong: true },
  { label: "Annotation Crop", kind: "check" },
  { label: "View Range", value: "Edit...", kind: "button" },
  { label: "Associated Level", value: "Level 1" },
  { label: "Scope Box", value: "None", strong: true },
  { label: "Depth Clipping", value: "No clip", kind: "button" },
  { label: "Identity Data", kind: "group" },
  { label: "View Template", value: "User Review -", kind: "button" },
  { label: "View Name", value: "1 - Ventilation", strong: true },
  { label: "Dependency", value: "Independent" },
  { label: "Title on Sheet", value: "", strong: true },
  { label: "Sheet Number", value: "MEP-102" },
  { label: "Sheet Name", value: "Ventilation Layout ..." },
  { label: "Referencing Sheet", value: "" },
  { label: "Referencing Detail", value: "" },
];

const PropertyLine = ({ row }: { row: PropRow }) => {
  if (row.kind === "group") {
    return (
      <tr className="h-3 bg-[#dadada] text-[#222]">
        <th colSpan={2} className="p-0 pl-0.5 text-left font-normal">{row.label}</th>
        <td className="p-0">
          <svg viewBox="0 0 6 8" className="block h-2 w-1.5" aria-hidden="true">
            <path d="M1 4l2-2 2 2M1 7l2-2 2 2" fill="none" stroke="#222" />
          </svg>
        </td>
      </tr>
    );
  }
  return (
    <tr className={`h-3 leading-[11px] ${row.strong ? "text-[#333]" : "text-[#808080]"}`}>
      <th className="truncate border-b border-dashed border-[#b9b9b9] p-0 pl-1 text-left font-normal whitespace-pre">{row.label}</th>
      <td className="border-x border-b border-dashed border-[#b9b9b9] p-0 whitespace-pre">
        {row.kind === "button" ? (
          <button className="block h-[11px] w-full rounded-xs border border-[#a8a8a8] bg-[#f4f4f4] leading-[9px]">{row.value}</button>
        ) : row.kind === "check" ? (
          <span className="relative ml-0.5 block size-[9px]">
            <input
              type="checkbox"
              aria-label={row.label}
              defaultChecked={row.checked}
              className="peer block size-[9px] appearance-none border border-[#c4c4c4] bg-[#f7f7f7]"
            />
            <svg viewBox="0 0 9 9" className="pointer-events-none absolute inset-0 hidden size-[9px] peer-checked:block">
              <path d="M2 4.500l2 2.500 3-5" fill="none" stroke="#999" />
            </svg>
          </span>
        ) : (
          <span className="block truncate whitespace-pre">{row.value}</span>
        )}
      </td>
      <td className="border-r border-b border-dashed border-[#b9b9b9] p-0" />
    </tr>
  );
};

const PropertiesPane = () => (
  <aside className="flex w-[172px] shrink-0 flex-col bg-[#f0f0f0]">
    <PaneTitle>Properties</PaneTitle>
    <button className="mt-px flex h-12 shrink-0 items-center border-t border-l border-[#8c8c8c] bg-[#ececec] px-0.5 text-[#aaa]">
      <span className="flex h-11 w-11 items-center justify-center border border-[#e0e0e0]">
        <svg viewBox="0 0 22 22" className="size-[22px]" fill="#e6e6e6" stroke="#9a9a9a" aria-hidden="true">
          <path d="M1 1h12v16H1z" />
          <path d="M8 8h6v-1h7v14H8z" />
          <path d="M9 8h5v5" fill="none" strokeDasharray="1 1" />
        </svg>
      </span>
      <span className="flex-1 pl-1 text-left">Floor Plan</span>
      <Caret />
    </button>
    <div className="flex h-[17px] shrink-0 items-center gap-1 pl-0.5 text-[#8c8c8c]">
      <Dropdown label="Type filter" value="Floor Plan: 1 - Ventilation" className="h-[14px] w-[113px] border-[#c2c2c2] bg-[#f4f4f4]" />
      <button className="flex items-center gap-[3px] text-[#a5a5a5]">
        <Glyph name="array" className="size-[11px]" />
        Edit Type
      </button>
    </div>
    <div className="flex flex-1 gap-px pr-px">
      <div className="ml-px flex-1 border-l border-[#999]">
        <table className="w-full table-fixed border-separate border-spacing-0">
          <colgroup>
            <col className="w-[75px]" />
            <col className="w-[75px]" />
            <col className="w-2" />
          </colgroup>
          <tbody>
            {PROPERTIES.map((row, index) => (
              <PropertyLine key={index} row={row} />
            ))}
          </tbody>
        </table>
      </div>
      <VerticalScroll before={0} thumb={422} after={48} />
    </div>
    <div className="flex h-5 shrink-0 items-center justify-between pr-0.5 pl-[3px]">
      <a href="#help" className="text-[#1d6fb8] underline">Properties help</a>
      <button className="h-[14px] w-[50px] rounded-xs border border-[#c0c0c0] bg-[#f4f4f4] text-[#8c8c8c]">Apply</button>
    </div>
  </aside>
);

/* ---------- device connection dialog ---------- */

const SOLUTIONS = [
  ["90", "90"],
  ["60", "60"],
  ["45", "45"],
  ["30", "30"],
  ["15", "15"],
  ["0", "90"],
];

const Preview = () => (
  <div className="relative h-[286px] border-2 border-[#777] border-r-[#ddd] border-b-[#ddd]">
    <div className="relative h-full border-[3px] border-[#5b4be8] bg-white">
      <svg viewBox="57 185 561 835" preserveAspectRatio="xMinYMin slice" className="absolute inset-0 size-full" fill="none" stroke="#666" strokeWidth="2.500" role="img" aria-label="Duct preview">
        <path d="M248 225L140 1020M240 335L148 1020M366 225L265 1020M375 225L273 1020" />
        <path d="M307 225L304 240M297 300L290 355M284 415L264 567M256 627L249 682M242 742L223 893M215 953L208 1008" />
        {/* upper connection */}
        <path d="M60 270L125 225M60 318L132 262M60 338L165 258M60 358L150 292M60 405L188 310" />
        <path d="M140 225L128 295L188 342L196 225M152 225L143 292L175 318L184 225" strokeWidth="4" />
        <path d="M150 290q40-20 83 10M190 318q20 0 43 14" />
        <path d="M202 225v115M210 225l-10 115M188 225v117" strokeWidth="5" />
        <path d="M247 225L232 334" strokeWidth="6" />
        <path d="M57 308L74 324L60 440" strokeWidth="4" />
        {/* lower connection */}
        <path d="M319 612L303 762" strokeWidth="8" />
        <path d="M318 612h35q30 2 47 20L535 742M318 647h30M345 712q25-2 40 8L530 842M303 730L345 712M303 758L350 742" />
        <path d="M385 655L522 768M388 692L515 800M368 752L480 842q25 30 55 36" />
        <path d="M352 585L338 775M365 588L350 775M352 585v190M358 620v120" strokeWidth="5" />
        <path d="M425 610L410 730L350 772L368 652zM410 632L402 725L368 752L380 655z" strokeWidth="4" />
        <path d="M553 718L535 842L478 884L495 765zM536 740L523 838L493 860L505 768z" strokeWidth="4" />
        <path d="M553 718L540 908M553 718L536 842" strokeWidth="5" />
        <path d="M550 747L618 750M515 765q15 18 35 18L618 785M548 813L618 817M540 845L618 848M520 877L618 882" />
        {/* cube */}
        <path d="M497 208l54 4 2 32-66-6zM487 238l66 6-2 48-60-6z" fill="#f1f1f1" stroke="#aaa" />
        <path d="M490 292q32 14 62 4" stroke="#ccc" strokeWidth="5" />
        <path d="M515 222l4-6M526 218v10M522 228h8" stroke="#888" />
        <text x="500" y="273" fontSize="13" fontWeight="700" fill="#777" stroke="none">RIGHT</text>
        {/* pan cursor */}
        <g fill="#fff" stroke="#222" strokeWidth="3">
          <path d="M275 713l9 10h-6v11h14v-7l10 10-10 10v-7h-14v11h6l-9 10-9-10h6v-11h-14v7l-10-10 10-10v7h14v-11h-6z" />
        </g>
      </svg>
      <NavBar className="top-[45px] right-2 border-[#999]" />
      <p className="relative w-[129px] bg-[#5b4be8] font-['Liberation_Sans'] text-[10px] leading-[13px] font-bold whitespace-nowrap text-[#111]">
        Temporary View Properties
      </p>
    </div>
  </div>
);

const DeviceDialog = () => (
  <div
    role="dialog"
    aria-label="Device connection"
    className="absolute top-[234px] right-[110px] flex w-[432px] flex-col rounded-t-md border border-[#46566b] bg-linear-to-b from-[#9bb8da] to-[#b6d3ee] px-[5px] pb-[5px] text-[#222] shadow-md"
  >
    <header className="flex h-[21px] items-center">
      <svg viewBox="0 0 10 10" className="mr-1 size-2.5" aria-hidden="true">
        <path d="M5 0.500l4 2v5l-4 2-4-2v-5z" fill="#f6c7cc" stroke="#d2566a" />
        <path d="M2 7V3l3 2.500L8 3v4" fill="none" stroke="#c93c54" />
      </svg>
      <h2 className="flex-1">Device connection</h2>
      <WindowButtons active />
    </header>
    <div className="flex h-[344px] border border-[#d5dde6] bg-[#f0f0f0] pl-0.5">
      <fieldset className="h-[321px] w-[201px] rounded-xs border border-[#dcdcdc] px-0.5">
        <legend className="leading-[10px]">3D View</legend>
        <Dropdown label="3D View" value="{3D}" className="mb-1 h-4 rounded-xs border-[#8a8a8a] bg-linear-to-b from-[#f4f4f4] to-[#d8d8d8]" />
        <Preview />
      </fieldset>
      <div className="flex w-[27px] flex-col items-center">
        <button aria-label="Toggle preview" className="flex size-3 items-center justify-center rounded-full border border-[#888] bg-[#f8f8f8]">
          <svg viewBox="0 0 6 6" className="size-1.5"><path d="M2 1l2 2-2 2" fill="none" stroke="#222" /></svg>
        </button>
        <span className="mt-1 leading-3 [writing-mode:vertical-rl]">Preview</span>
      </div>
      <div className="flex w-[189px] flex-col">
        <fieldset className="rounded-xs border border-[#dcdcdc] px-[3px] pb-1">
          <legend className="leading-[10px]">Ducts</legend>
          <div className="flex h-[59px] gap-1 pt-px">
            <div className="flex flex-col justify-between">
              <button aria-label="Connect from top" className="flex h-[27px] w-[27px] items-center justify-center rounded-xs border border-[#8a8a8a] bg-[#dedede]">
                <svg viewBox="0 0 24 24" className="size-6" fill="none" stroke="#75808c">
                  <path d="M2 16h20M2 19h20" />
                  <path d="M6 19v-7h3V9h7v3h3v7h-3v-4H9v4z" fill="#bcd8ee" stroke="#6aa2cc" />
                  <path d="M9 4v7M15 4v7M12 3v6M8 9h8" />
                </svg>
              </button>
              <button aria-label="Connect directly" className="flex h-[27px] w-[27px] items-center justify-center rounded-xs border border-[#3c7fb1] bg-[#a9daf5]">
                <svg viewBox="0 0 24 24" className="size-6" fill="none" stroke="#56697c">
                  <path d="M2 9h6M16 9h6M3 15h18M3 19h18" />
                  <path d="M3 17h18" stroke="#e8f4fc" strokeWidth="2" />
                  <path d="M8 7h8v4a4 4 0 0 1-8 0zM9 3v6M15 3v6M12 4v9" />
                </svg>
              </button>
            </div>
            <div className="w-0 flex-1 overflow-hidden border border-[#8a9bb0] bg-white">
              <table className="w-full table-fixed border-collapse">
                <thead>
                  <tr>
                    <th className="h-[15px] bg-linear-to-b from-white to-[#f3f3f3] p-0 pl-[3px] text-left font-normal">Duct series</th>
                  </tr>
                </thead>
                <tbody>
                  <tr>
                    <td className="h-[11px] overflow-hidden border-b border-[#333] p-0 pl-px leading-[10px] whitespace-nowrap">
                      Rectangular 2 DW144 Radius Bend / Flang
                    </td>
                  </tr>
                </tbody>
              </table>
            </div>
          </div>
        </fieldset>
        <fieldset className="mt-1.5 rounded-xs border border-[#dcdcdc] px-[3px] pb-[5px]">
          <legend className="leading-[10px]">Flexible ducts</legend>
          <label className="mt-0.5 flex items-center gap-0.5 leading-[10px]">
            <input type="checkbox" className="size-[9px] appearance-none border border-[#999] bg-[#eee]" />
            Use flexible duct to connect the device
          </label>
          <Dropdown label="Flexible duct type" value="Flex - Rectangular" className="mt-1 h-[15px] rounded-xs border-[#b9b9b9] bg-[#f2f2f2] text-[#888]" />
          <div className="mt-[5px] flex items-center">
            <label htmlFor="max-distance" className="w-[109px]">Maximum distance:</label>
            <input id="max-distance" type="text" defaultValue="1000" className="mr-1 h-[14px] w-[33px] border border-[#aaa] px-0.5 text-[#888]" />
            mm
          </div>
        </fieldset>
        <fieldset className="mt-1.5 rounded-xs border border-[#dcdcdc] px-[3px] pb-1">
          <legend className="leading-[10px]">Solutions</legend>
          <div className="mt-0.5 h-[153px] border border-[#8a9bb0] bg-white">
            <table className="w-full table-fixed border-collapse">
              <thead>
                <tr className="h-[13px] bg-linear-to-b from-white to-[#f3f3f3]">
                  <th className="border-r border-[#ddd] p-0 pl-[3px] text-left font-normal">First</th>
                  <th className="p-0 pl-[3px] text-left font-normal">Second</th>
                </tr>
              </thead>
              <tbody>
                {SOLUTIONS.map(([first, second], index) => (
                  <tr key={index} className={`h-[11px] border-b border-[#222] leading-[10px] ${first === "45" ? "bg-[#f0f0f0]" : ""}`}>
                    <td className="border-r border-[#222] p-0 pl-px">{first}</td>
                    <td className="p-0 pl-px">{second}</td>
                  </tr>
                ))}
              </tbody>
            </table>
          </div>
        </fieldset>
        <div className="mt-1.5 flex justify-end gap-1.5">
          <button className="h-[15px] w-[50px] rounded-xs border border-[#8a8a8a] bg-linear-to-b from-[#f4f4f4] to-[#d6d6d6]">OK</button>
          <button className="h-[15px] w-[50px] rounded-xs border border-[#8a8a8a] bg-linear-to-b from-[#f4f4f4] to-[#d6d6d6]">Cancel</button>
        </div>
      </div>
    </div>
  </div>
);

/* ---------- status bar ---------- */

const StatusBar = () => (
  <footer className="flex h-[15px] shrink-0 items-center border-t border-[#a0a0a0] bg-[#cfcfcf] text-[#222]">
    <p className="w-[600px] pl-0.5">Hold button and move mouse to Scroll the view. Hold Ctrl key to Zoom. Hold Shift key to Spin.</p>
    <span className="w-[17px] text-[#888]"><Glyph name="boxes" /></span>
    <Dropdown label="Workset" value="" className="h-3 w-[138px] border-[#bbb] bg-white text-[#aaa]" />
    <span className="flex w-[38px] items-center pl-1"><Glyph name="match" className="size-3 text-[#777]" />:0</span>
    <span className="flex w-[36px] gap-1 text-[#888]"><Glyph name="closeHidden" /><Glyph name="sheet" /></span>
    <Dropdown label="Design option" value="Main Model" className="h-3 w-[137px] border-[#ccc] bg-[#e4e4e4] text-[#888]" />
    <div className="flex flex-1 items-center justify-end gap-1.5 pr-11 text-[#8e8e8e]">
      {["joinGeo", "wallJoin", "unpin", "tag", "trimMulti", "sun"].map((name) => (
        <button key={name} aria-label={name}><Glyph name={name} className="size-[11px]" /></button>
      ))}
      <span className="flex items-center text-[#333]"><Funnel className="size-[11px]" />:0</span>
    </div>
  </footer>
);

export default function App() {
  return (
    <div className="relative flex min-h-screen flex-col overflow-hidden bg-[#cfcfcf] font-[Roboto,'Open_Sans',sans-serif] text-[8px] leading-3">
      <TitleBar />
      <RibbonTabs />
      <Ribbon />
      <OptionsBar />
      <main className="flex flex-1 gap-1 border-t border-[#888] bg-[#e6e8ea]">
        <ProjectBrowser />
        <div className="flex min-w-0 flex-1">
          <ViewWindow title="3D View: 3D Ventilation - Clash Detection.rvt" tools={VIEW_TOOLS_3D} thumb={{ before: 88, thumb: 10, after: 90 }}>
            <ThreeDView />
            <NavBar className="top-[106px] right-px border-[#777]" />
          </ViewWindow>
          <ViewWindow title="Floor Plan: 1 - Ventilation - Clash Detection.rvt" active tools={VIEW_TOOLS_PLAN} thumb={{ before: 110, thumb: 10, after: 112 }}>
            <FloorPlanView />
            <NavBar className="top-0 right-px border-[#bbb]" flat />
          </ViewWindow>
        </div>
        <PropertiesPane />
      </main>
      <StatusBar />
      <DeviceDialog />
    </div>
  );
}
